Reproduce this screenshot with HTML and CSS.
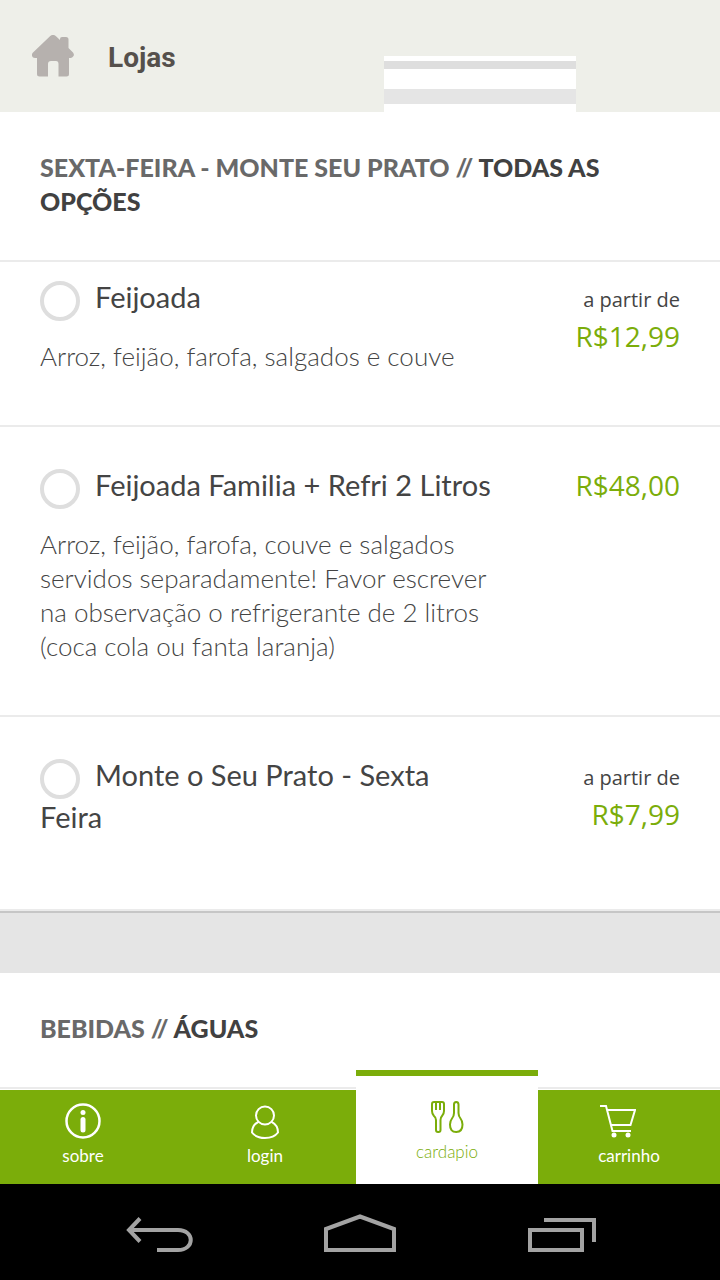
FILE: index.html
```html
<!DOCTYPE html>
<html lang="pt-BR">
<head>
    <meta charset="UTF-8">
    <meta name="viewport" content="width=device-width, initial-scale=1.0">
    <title>Lojas</title>
    <link rel="stylesheet" href="styles.css">
</head>
<body>

    <header class="topbar">
        <a href="#" class="topbar-link">
            <svg class="home-icon" width="44" height="44" viewBox="1 1 44 44" aria-hidden="true">
                <path d="M19 2.2Q22 -.5 25 2.2L29 6V5Q29 3 31 3H35Q37.500 3 37.500 5.500V14L42 18.500Q43.500 20.500 42.500 22T40 24H38V40Q38 42.500 35.500 42.500H27.500V30Q27.500 27 25 27H20Q17 27 17 30V42.500H8.500Q6 42.500 6 40V24H4Q1.500 24 1 22T2 18.500Z"/>
            </svg>
            <span>Lojas</span>
        </a>
        <div class="banner"></div>
    </header>

    <main class="menu">
        <section>
            <h2 class="menu-heading"><span>SEXTA-FEIRA - MONTE SEU PRATO //</span> <strong>TODAS AS OPÇÕES</strong></h2>

            <div class="item item-first">
                <div class="item-info">
                    <div class="item-title"><input type="radio" name="prato" id="feijoada" class="item-radio"><label for="feijoada">Feijoada</label></div>
                    <p class="item-desc">Arroz, feijão, farofa, salgados e couve</p>
                </div>
                <div class="item-price">
                    <span class="price-from">a partir de</span>
                    <span class="price">R$12,99</span>
                </div>
            </div>

            <div class="item">
                <div class="item-info">
                    <div class="item-title"><input type="radio" name="prato" id="familia" class="item-radio"><label for="familia">Feijoada Familia + Refri 2 Litros</label></div>
                    <p class="item-desc">Arroz, feijão, farofa, couve e salgados servidos separadamente! Favor escrever na observação o refrigerante de 2 litros (coca cola ou fanta laranja)</p>
                </div>
                <div class="item-price">
                    <span class="price">R$48,00</span>
                </div>
            </div>

            <div class="item item-last">
                <div class="item-info">
                    <div class="item-title"><input type="radio" name="prato" id="monte" class="item-radio"><label for="monte">Monte o Seu Prato - Sexta Feira</label></div>
                </div>
                <div class="item-price">
                    <span class="price-from">a partir de</span>
                    <span class="price">R$7,99</span>
                </div>
            </div>
        </section>

        <div class="divider"></div>

        <section>
            <h2 class="menu-heading"><span>BEBIDAS //</span> <strong>ÁGUAS</strong></h2>
        </section>
    </main>

    <nav class="tabs">
        <a href="#" class="tab">
            <svg width="36" height="36" viewBox="0 0 36 36" fill="none" stroke="currentColor" aria-hidden="true">
                <circle cx="18" cy="18" r="16.500" stroke-width="2.500"/>
                <circle cx="18" cy="9.500" r="2.500" fill="currentColor" stroke="none"/>
                <path d="M18 16.500V27" stroke-width="5" stroke-linecap="round"/>
            </svg>
            <span>sobre</span>
        </a>
        <a href="#" class="tab">
            <svg width="36" height="36" viewBox="0 0 36 36" fill="none" stroke="currentColor" stroke-width="2" aria-hidden="true">
                <circle cx="18" cy="12.500" r="9"/>
                <path d="M11.500 18.800C7 21 5 25 5 29.500C8 33.500 13 35 18 35S28 33.500 31 29.500C31 25 29 21 24.500 18.800"/>
            </svg>
            <span>login</span>
        </a>
        <a href="#" class="tab tab-active">
            <svg width="36" height="36" viewBox="0 0 36 36" fill="none" stroke="currentColor" stroke-width="2" stroke-linejoin="round" aria-hidden="true">
                <path d="M3 5Q3 3 5 3H13Q15 3 15 5V12Q15 15 13 17Q11.500 18.500 11.500 21V31Q11.500 33 9.500 33H9Q7 33 7 31V21Q7 18.500 5 17Q3 15 3 12Z"/>
                <path d="M7 3V11M11 3V11"/>
                <path d="M25 5.500Q25 3 27.200 3T29.500 5.500V14Q29.500 17 31.500 19.500Q33.500 22 33.500 25.500Q33.500 33 27.200 33T21 25.500Q21 22 23 19.500Q25 17 25 14Z"/>
            </svg>
            <span>cardapio</span>
        </a>
        <a href="#" class="tab">
            <svg class="cart-icon" width="36" height="36" viewBox="0 0 36 36" fill="none" stroke="currentColor" stroke-width="2" aria-hidden="true">
                <path d="M0 3H6L12.500 28H31M7.500 7H35L30.500 22H11"/>
                <circle cx="14" cy="32" r="2.500" fill="currentColor" stroke="none"/>
                <circle cx="28" cy="32" r="2.500" fill="currentColor" stroke="none"/>
            </svg>
            <span>carrinho</span>
        </a>
    </nav>

    <footer class="navbar">
        <button type="button" class="navbar-button" aria-label="Voltar">
            <svg width="72" height="40" viewBox="0 0 72 40">
                <path d="M5 18H54C71 18 71 38 54 38H33"/>
                <path d="M16 6.500L5 18L16 29.500"/>
            </svg>
        </button>
        <button type="button" class="navbar-button" aria-label="Início">
            <svg width="72" height="40" viewBox="0 0 72 40">
                <path d="M2 38V17L36 4.500L70 17V38Z"/>
            </svg>
        </button>
        <button type="button" class="navbar-button" aria-label="Recentes">
            <svg width="72" height="40" viewBox="0 0 72 40">
                <path d="M6 18H58V38H6Z"/>
                <path d="M20 8H70V30"/>
            </svg>
        </button>
    </footer>

</body>
</html>
```
FILE: styles.css
```css
* { box-sizing: border-box; }
body { font-family: Lato, sans-serif; background-color: #ffffff; color: #444444; margin: 0; min-height: 100vh; display: flex; flex-direction: column; overflow-x: hidden; }
a { color: inherit; text-decoration: none; }

.topbar { display: flex; justify-content: space-between; align-items: center; height: 112px; padding: 2px 20% 0 32px; background-color: #eeefe9; }
.topbar-link { display: flex; align-items: center; gap: 32px; font-family: Roboto, sans-serif; font-size: 28px; font-weight: 700; color: #55504c; }
.home-icon { fill: #b6b1ae; }
.banner { align-self: flex-end; width: 192px; height: 56px; background: linear-gradient(#ffffff 5px, #dedede 5px, #dedede 13px, #ffffff 13px, #ffffff 33px, #e5e5e5 33px, #e5e5e5 48px, #ffffff 48px); }

.menu { flex: 1; }
.menu-heading { margin: 0; padding: 38px 40px 42px; border-bottom: 2px solid #ebebeb; font-size: 25px; line-height: 34px; font-weight: 900; color: #696969; }
.menu-heading strong { font-weight: 900; color: #414141; }

.item { display: flex; justify-content: space-between; padding: 37px 40px 52px; border-bottom: 2px solid #ebebeb; }
.item-first { padding-top: 14px; }
.item-last { padding-bottom: 71px; }
.item-info { width: 71%; }
.item-title { font-size: 29px; line-height: 42px; }
.item-radio { appearance: none; width: 40px; height: 40px; margin: -4px 15px -4px 0; border: 4px solid #dedede; border-radius: 50%; background-color: #ffffff; vertical-align: middle; }
.item-radio:checked { background-color: #7bad0a; }
.item-desc { margin: 21px 0 0; font-size: 26px; line-height: 34px; font-weight: 300; }
.item-price { display: flex; flex-direction: column; font-family: "Open Sans", sans-serif; text-align: right; }
.price-from { margin-top: 9px; font-size: 20px; line-height: 30px; }
.price { font-size: 28px; line-height: 42px; color: #7bad0a; }

.divider { height: 62px; border-top: 2px solid #c6c6c6; background-color: #e5e5e5; }

/* the first tab runs a little past the left edge */
.tabs { display: grid; grid-template-columns: repeat(4, 1fr); height: 94px; margin-left: -8px; background-color: #7bad0a; color: #ffffff; }
.tab { display: flex; flex-direction: column; align-items: center; gap: 5px; padding-top: 13px; font-size: 17px; line-height: 24px; }
.tab-active { margin-top: -20px; padding-top: 23px; border-top: 6px solid #7bad0a; background-color: #ffffff; color: #7bad0a; font-weight: 300; }
.cart-icon { margin-right: 22px; }

.navbar { display: flex; justify-content: space-between; align-items: center; height: 96px; padding: 0 124px; background-color: #000000; }
.navbar-button { padding: 0; border: 0; background: none; }
.navbar-button svg { display: block; fill: none; stroke: #a3a3a3; stroke-width: 4; }
```
